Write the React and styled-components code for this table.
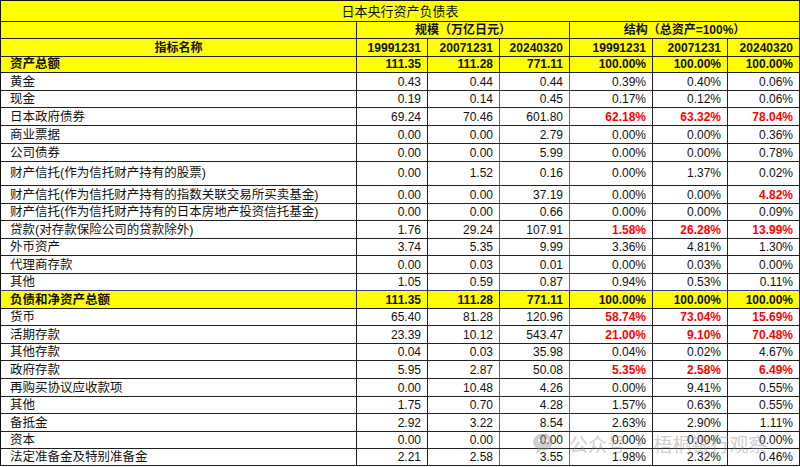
import React from 'react';
import styled, { createGlobalStyle } from 'styled-components';

const GlobalStyle = createGlobalStyle`
  body {
    margin: 0;
    background: #fff;
    font-family: "Liberation Sans", "Noto Sans CJK SC", sans-serif;
    color: #111;
  }
`;

const COLS = '356px 71px 72px 70px 83px 75px 72px';

const Sheet = styled.div`
  position: relative;
  width: 800px;
  height: 467px;
  overflow: hidden;
`;

const Table = styled.div`
  display: flex;
  flex-direction: column;
  width: 800px;
  border-top: 1px solid #111;
  border-left: 1px solid #111;
  box-sizing: border-box;
`;

const Row = styled.div`
  display: grid;
  grid-template-columns: ${COLS};
  height: ${(p) => p.$h}px;
  box-sizing: border-box;
  border-bottom: 1px solid ${(p) => (p.$blue ? '#3c3c8c' : '#222')};
  background: ${(p) => (p.$hl ? '#ffff00' : '#fff')};
  font-weight: ${(p) => (p.$bold ? 700 : 400)};
`;

const Cell = styled.div`
  display: flex;
  align-items: ${(p) => (p.$mid ? 'center' : 'flex-end')};
  justify-content: ${(p) => (p.$align === 'left' ? 'flex-start' : p.$align === 'center' ? 'center' : 'flex-end')};
  grid-column: ${(p) => p.$span || 'auto'};
  padding-bottom: 1px;
  border-right: 1px solid ${(p) => (p.$soft ? '#6a6a6a' : '#222')};
  box-sizing: border-box;
  font-size: ${(p) => (p.$align === 'left' ? '12.5px' : '12px')};
  line-height: 14px;
  white-space: nowrap;
  color: ${(p) => (p.$red ? '#ff0000' : '#111')};
  font-weight: ${(p) => (p.$red ? 700 : 'inherit')};
`;

const Title = styled(Cell)`
  font-size: 13px;
  padding-bottom: 2px;
`;

const Label = styled(Cell)`
  padding-left: 9px;
`;

const Num = styled(Cell)`
  padding-right: 6px;
`;

const Watermark = styled.div`
  position: absolute;
  left: 533px;
  top: 430px;
  display: flex;
  align-items: center;
  gap: 10px;
  opacity: 0.4;
  pointer-events: none;
`;

const MarkText = styled.span`
  font-family: "Noto Sans CJK SC", sans-serif;
  font-size: 19px;
  color: #8a8a8a;
`;

const assets = [
  ['黄金', '0.43', '0.44', '0.44', '0.39%', '0.40%', '0.06%', '', 18],
  ['现金', '0.19', '0.14', '0.45', '0.17%', '0.12%', '0.06%', '', 17],
  ['日本政府债券', '69.24', '70.46', '601.80', '62.18%', '63.32%', '78.04%', 'rrr', 18],
  ['商业票据', '0.00', '0.00', '2.79', '0.00%', '0.00%', '0.36%', '', 18],
  ['公司债券', '0.00', '0.00', '5.99', '0.00%', '0.00%', '0.78%', '', 18],
  ['财产信托(作为信托财产持有的股票)', '0.00', '1.52', '0.16', '0.00%', '1.37%', '0.02%', '', 24],
  ['财产信托(作为信托财产持有的指数关联交易所买卖基金)', '0.00', '0.00', '37.19', '0.00%', '0.00%', '4.82%', '--r', 18],
  ['财产信托(作为信托财产持有的日本房地产投资信托基金)', '0.00', '0.00', '0.66', '0.00%', '0.00%', '0.09%', '', 17],
  ['贷款(对存款保险公司的贷款除外)', '1.76', '29.24', '107.91', '1.58%', '26.28%', '13.99%', 'rrr', 18],
  ['外币资产', '3.74', '5.35', '9.99', '3.36%', '4.81%', '1.30%', '', 17],
  ['代理商存款', '0.00', '0.03', '0.01', '0.00%', '0.03%', '0.00%', '', 18],
  ['其他', '1.05', '0.59', '0.87', '0.94%', '0.53%', '0.11%', '', 17],
];

const liabilities = [
  ['货币', '65.40', '81.28', '120.96', '58.74%', '73.04%', '15.69%', 'rrr', 17],
  ['活期存款', '23.39', '10.12', '543.47', '21.00%', '9.10%', '70.48%', 'rrr', 18],
  ['其他存款', '0.04', '0.03', '35.98', '0.04%', '0.02%', '4.67%', '', 17],
  ['政府存款', '5.95', '2.87', '50.08', '5.35%', '2.58%', '6.49%', 'rrr', 18],
  ['再购买协议应收款项', '0.00', '10.48', '4.26', '0.00%', '9.41%', '0.55%', '', 18],
  ['其他', '1.75', '0.70', '4.28', '1.57%', '0.63%', '0.55%', '', 17],
  ['备抵金', '2.92', '3.22', '8.54', '2.63%', '2.90%', '1.11%', '', 18],
  ['资本', '0.00', '0.00', '0.00', '0.00%', '0.00%', '0.00%', '', 17],
  ['法定准备金及特别准备金', '2.21', '2.58', '3.55', '1.98%', '2.32%', '0.46%', '', 17],
];

const DataRow = ({ row, blue }) => {
  const [name, a, b, c, d, e, f, red, h] = row;
  const mid = h > 20;
  return (
    <Row $h={h} $blue={blue}>
      <Label $align="left" $mid={mid}>{name}</Label>
      <Num $mid={mid}>{a}</Num>
      <Num $mid={mid} $soft>{b}</Num>
      <Num $mid={mid} $soft>{c}</Num>
      <Num $mid={mid} $red={red[0] === 'r'}>{d}</Num>
      <Num $mid={mid} $red={red[1] === 'r'}>{e}</Num>
      <Num $mid={mid} $red={red[2] === 'r'}>{f}</Num>
    </Row>
  );
};

const TotalRow = ({ name, h }) => (
  <Row $h={h} $hl $bold>
    <Label $align="left">{name}</Label>
    <Num>111.35</Num>
    <Num>111.28</Num>
    <Num>771.11</Num>
    <Num>100.00%</Num>
    <Num>100.00%</Num>
    <Num>100.00%</Num>
  </Row>
);

const WeChatIcon = () => (
  <svg width="26" height="24" viewBox="0 0 26 24">
    <ellipse cx="10" cy="10" rx="10" ry="8.5" fill="#8a8a8a" />
    <path d="M4 17 L3 22 L8 18 Z" fill="#8a8a8a" />
    <circle cx="6.5" cy="8.5" r="1.4" fill="#fff" />
    <circle cx="13.5" cy="8.5" r="1.4" fill="#fff" />
  </svg>
);

export default function App() {
  return (
    <Sheet>
      <GlobalStyle />
      <Table>
        <Row $h={21} $hl>
          <Title $align="center" $span="1 / -1">日本央行资产负债表</Title>
        </Row>
        <Row $h={17} $hl $bold>
          <Cell />
          <Cell $align="center" $span="2 / 5">规模（万亿日元）</Cell>
          <Cell $align="center" $span="5 / 8">结构（总资产=100%）</Cell>
        </Row>
        <Row $h={18} $hl $bold>
          <Cell $align="center">指标名称</Cell>
          <Num>19991231</Num>
          <Num>20071231</Num>
          <Num>20240320</Num>
          <Num>19991231</Num>
          <Num>20071231</Num>
          <Num>20240320</Num>
        </Row>
        <TotalRow name="资产总额" h={16} />
        {assets.map((r, i) => (
          <DataRow key={'a' + i} row={r} blue={i === assets.length - 1} />
        ))}
        <TotalRow name="负债和净资产总额" h={18} />
        {liabilities.map((r, i) => (
          <DataRow key={'l' + i} row={r} />
        ))}
      </Table>
      <Watermark>
        <WeChatIcon />
        <MarkText>公众号 · 梧桐银行观察</MarkText>
      </Watermark>
    </Sheet>
  );
}
